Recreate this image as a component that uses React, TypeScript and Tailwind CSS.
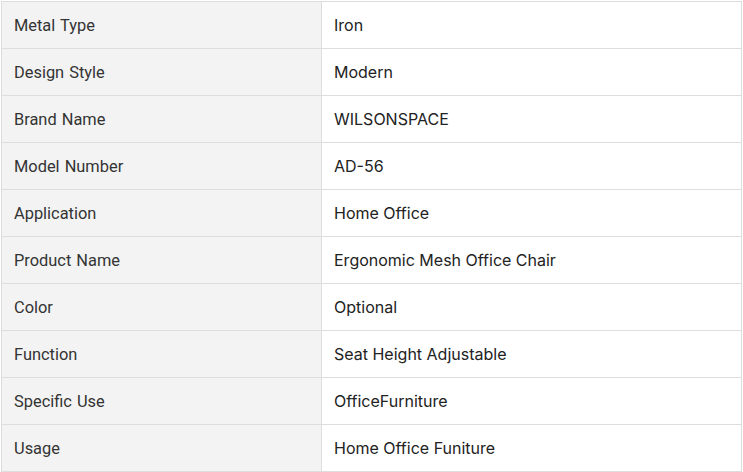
import React from "react";

const rows: [string, string][] = [
  ["Metal Type", "Iron"],
  ["Design Style", "Modern"],
  ["Brand Name", "WILSONSPACE"],
  ["Model Number", "AD-56"],
  ["Application", "Home Office"],
  ["Product Name", "Ergonomic Mesh Office Chair"],
  ["Color", "Optional"],
  ["Function", "Seat Height Adjustable"],
  ["Specific Use", "OfficeFurniture"],
  ["Usage", "Home Office Funiture"],
];

export default function App() {
  return (
    <div className="w-[743px] h-[472px] bg-white pt-[1px] pl-[1px]" style={{ fontFamily: "Inter, 'Noto Sans', sans-serif" }}>
      <div className="w-[741px] border-t border-l border-r border-[#dddddd] flex flex-col">
        {rows.map(([k, v]) => (
          <div key={k} className="flex h-[47px] border-b border-[#dddddd]">
            <div className="w-[320px] bg-[#f3f3f3] border-r border-[#dddddd] pl-[12px] pt-[2px] flex items-center text-[16.4px] text-[#333333] font-['Roboto',sans-serif] [word-spacing:1px]">
              {k}
            </div>
            <div className="flex-1 pl-[12px] flex items-center text-[16px] text-[#222222]">
              {v}
            </div>
          </div>
        ))}
      </div>
    </div>
  );
}
